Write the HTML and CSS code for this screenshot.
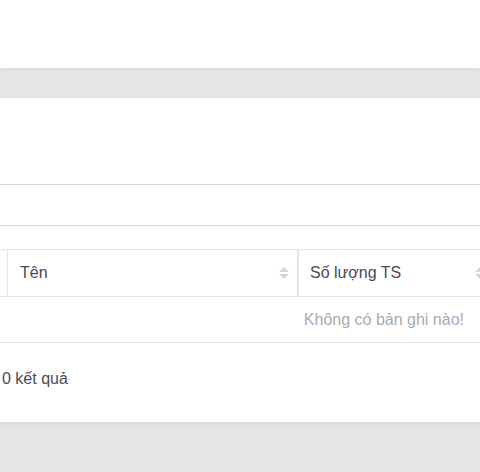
FILE: index.html
```html
<!DOCTYPE html>
<html lang="vi">
<head>
<meta charset="utf-8">
<link rel="stylesheet" href="styles.css">
</head>
<body>
<div class="header"></div>
<div class="main">
  <div class="card">
    <div class="search"></div>
    <div class="table">
      <div class="row head">
        <div class="cell c0"></div>
        <div class="cell c1"><span>Tên</span><span class="sort"><i class="up"></i><i class="down"></i></span></div>
        <div class="cell c2"><span>Số lượng TS</span><span class="sort"><i class="up"></i><i class="down"></i></span></div>
      </div>
      <div class="row empty">
        <span class="empty-text">Không có bản ghi nào!</span>
      </div>
    </div>
    <div class="footer">0 kết quả</div>
  </div>
</div>
</body>
</html>
```
FILE: styles.css
```css
html, body {
  margin: 0;
  padding: 0;
}
body {
  background: #e6e6e6;
  font-family: "Liberation Sans", Arial, sans-serif;
  overflow: hidden;
  height: 472px;
}
.header {
  height: 68px;
  background: #ffffff;
  box-shadow: 0 1px 6px rgba(0, 0, 0, 0.07);
  position: relative;
  z-index: 1;
}
.main {
  padding-top: 30px;
}
.card {
  background: #ffffff;
  height: 324px;
  box-shadow: 0 2px 6px rgba(0, 0, 0, 0.07);
  padding-top: 86px;
  box-sizing: border-box;
  overflow: hidden;
}
.search {
  height: 40px;
  border-top: 1px solid #d6d6d9;
  border-bottom: 1px solid #d6d6d9;
}
.table {
  margin-top: 23px;
  width: 520px;
}
.row {
  display: flex;
  border-bottom: 1px solid #e6e6ee;
}
.head {
  border-top: 1px solid #e6e6ee;
  height: 46px;
}
.cell {
  display: flex;
  align-items: center;
  justify-content: space-between;
  font-size: 16px;
  color: #4a4a57;
  box-sizing: border-box;
}
.c0 {
  width: 8px;
  border-right: 1px solid #e6e6ee;
}
.c1 {
  width: 291px;
  padding: 0 8px 0 12px;
  border-right: 2px solid #e6e6ee;
}
.c2 {
  width: 194px;
  padding: 0 8px 0 11px;
}
.sort {
  display: flex;
  flex-direction: column;
  gap: 2px;
}
.sort i {
  display: block;
  width: 0;
  height: 0;
  border-left: 5px solid transparent;
  border-right: 5px solid transparent;
}
.sort .up {
  border-bottom: 5px solid #d4d4dc;
}
.sort .down {
  border-top: 5px solid #d4d4dc;
}
.empty {
  height: 46px;
  width: 480px;
  align-items: center;
  justify-content: flex-end;
  padding-right: 16px;
  box-sizing: border-box;
}
.empty-text {
  font-size: 16px;
  color: #a9a9b6;
}
.footer {
  padding-left: 2px;
  height: 72px;
  display: flex;
  align-items: center;
  font-size: 16px;
  color: #4a4a57;
}
```
